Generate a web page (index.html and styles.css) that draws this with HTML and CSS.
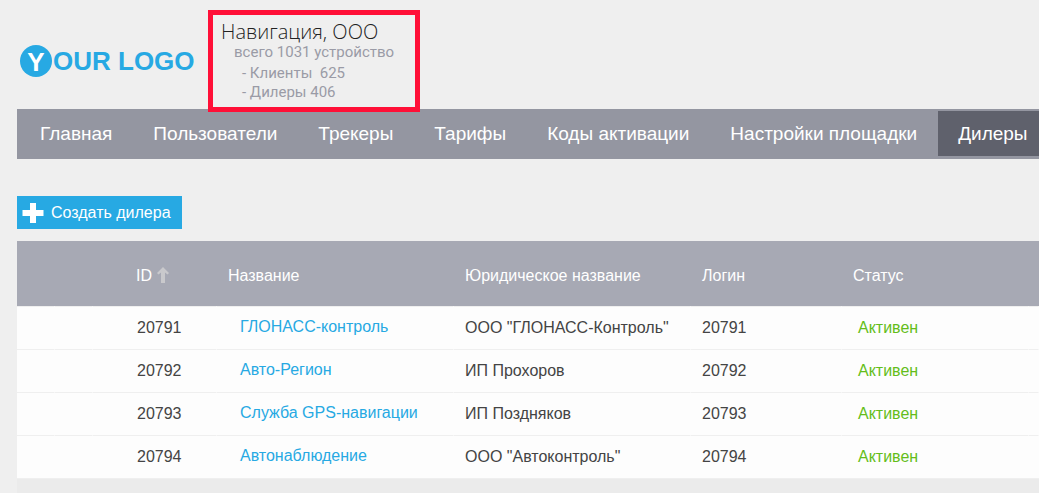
FILE: index.html
```html
<!DOCTYPE html>
<html lang="ru">
<head>
    <meta charset="UTF-8">
    <meta name="viewport" content="width=device-width, initial-scale=1.0">
    <title>Дилеры</title>
    <link rel="stylesheet" href="styles.css">
</head>
<body>
    <div class="header">
        <a class="logo" href="#"><span class="logo-mark">Y</span><span class="logo-text">OUR LOGO</span></a>
        <div class="account">
            <div class="account-name">Навигация, ООО</div>
            <div class="account-total">всего 1031 устройство</div>
            <ul class="account-stats">
                <li>- Клиенты&nbsp; 625</li>
                <li>- Дилеры 406</li>
            </ul>
        </div>
    </div>

    <nav class="nav">
        <a href="#">Главная</a>
        <a href="#">Пользователи</a>
        <a href="#">Трекеры</a>
        <a href="#">Тарифы</a>
        <a href="#">Коды активации</a>
        <a href="#">Настройки площадки</a>
        <a href="#" class="active">Дилеры</a>
    </nav>

    <div class="toolbar">
        <button class="create-btn" type="button">
            <svg width="22" height="22" viewBox="0 0 22 22"><path d="M8 1h6v7h7.500v6H14v7H8v-7H.5V8H8z" fill="#fff"/></svg>
            Создать дилера
        </button>
    </div>

    <table class="dealers">
        <colgroup>
            <col class="col-tool">
            <col class="col-tool">
            <col class="col-id">
            <col class="col-name">
            <col class="col-name">
            <col class="col-login">
            <col class="col-status">
            <col>
        </colgroup>
        <thead>
            <tr>
                <th></th>
                <th></th>
                <th class="id">ID <svg width="12" height="16" viewBox="0 0 12 16"><path d="M6 0l6 6-1.500 1.500L8 5.500V16H4V5.500L1.500 7.500 0 6z" fill="#c9c9cc"/></svg></th>
                <th>Название</th>
                <th>Юридическое название</th>
                <th>Логин</th>
                <th>Статус</th>
                <th></th>
            </tr>
        </thead>
        <tbody>
            <tr>
                <td></td>
                <td></td>
                <td class="id">20791</td>
                <td class="name"><a href="#">ГЛОНАСС-контроль</a></td>
                <td>ООО "ГЛОНАСС-Контроль"</td>
                <td>20791</td>
                <td class="status">Активен</td>
                <td></td>
            </tr>
            <tr>
                <td></td>
                <td></td>
                <td class="id">20792</td>
                <td class="name"><a href="#">Авто-Регион</a></td>
                <td>ИП Прохоров</td>
                <td>20792</td>
                <td class="status">Активен</td>
                <td></td>
            </tr>
            <tr>
                <td></td>
                <td></td>
                <td class="id">20793</td>
                <td class="name"><a href="#">Служба GPS-навигации</a></td>
                <td>ИП Поздняков</td>
                <td>20793</td>
                <td class="status">Активен</td>
                <td></td>
            </tr>
            <tr>
                <td></td>
                <td></td>
                <td class="id">20794</td>
                <td class="name"><a href="#">Автонаблюдение</a></td>
                <td>ООО "Автоконтроль"</td>
                <td>20794</td>
                <td class="status">Активен</td>
                <td></td>
            </tr>
        </tbody>
    </table>
    <div class="table-footer"></div>
</body>
</html>
```

FILE: styles.css
```css
* {
    margin: 0;
    padding: 0;
    box-sizing: border-box;
}

body {
    display: flex;
    flex-direction: column;
    min-height: 100vh;
    padding-left: 17px;
    overflow-x: hidden;
    background: #efefef;
    color: #444;
    font-family: "Liberation Sans", Arial, sans-serif;
    font-size: 16px;
}

a {
    color: #27a9e3;
    text-decoration: none;
}

.header {
    display: flex;
    align-items: flex-start;
    padding-top: 10px;
}

.logo {
    display: flex;
    align-items: center;
    width: 191px;
    padding-left: 3px;
    margin-top: 34px;
    font-size: 26px;
    font-weight: bold;
    line-height: 34px;
    white-space: nowrap;
}

.logo-mark {
    width: 32px;
    height: 32px;
    margin-right: 1px;
    border-radius: 50%;
    background: #27a9e3;
    color: #fff;
    text-align: center;
}

/* the frame hangs slightly over the menu */
.account {
    position: relative;
    z-index: 1;
    width: 212px;
    margin-bottom: -3px;
    padding: 6px 8px 5px;
    border: 5px solid #ff0f37;
    color: #9a9ba6;
    font-family: Roboto, sans-serif;
    font-size: 15px;
    line-height: 19px;
    white-space: nowrap;
}

.account-name {
    color: #222;
    font-family: "Open Sans", sans-serif;
    font-size: 20px;
    font-weight: 300;
    line-height: 22px;
}

.account-total {
    padding-left: 13px;
    margin-bottom: 2px;
}

.account-stats {
    padding-left: 21px;
    list-style: none;
}

.nav {
    display: flex;
    gap: 1px;
    height: 50px;
    padding: 2px 0 3px 3px;
    overflow: hidden;
    background: #9496a1;
}

.nav a {
    flex-shrink: 0;
    padding: 0 20px;
    color: #fff;
    font-size: 19px;
    line-height: 45px;
}

.nav a.active {
    background: #5f616c;
}

.toolbar {
    padding: 37px 0 12px;
}

.create-btn {
    display: flex;
    align-items: center;
    gap: 7px;
    height: 33px;
    padding: 0 11px 0 5px;
    border: none;
    background: #27a9e3;
    color: #fff;
    font-family: inherit;
    font-size: 16px;
    cursor: pointer;
}

.dealers {
    width: 100%;
    table-layout: fixed;
    border-collapse: separate;
    border-spacing: 0;
    white-space: nowrap;
}

.col-tool {
    width: 38px;
}

.col-id {
    width: 124px;
}

.col-name {
    width: 237px;
}

.col-login {
    width: 151px;
}

.col-status {
    width: 187px;
}

.dealers th {
    height: 65px;
    padding: 4px 0 0 11px;
    background: #a7a9b4;
    color: #fff;
    font-weight: normal;
    text-align: left;
}

.dealers th.id {
    padding-left: 43px;
}

.dealers th svg {
    margin-left: 1px;
    vertical-align: -2px;
}

.dealers td {
    height: 43px;
    padding-left: 11px;
    border-top: 1px solid #efefef;
    border-right: 1px solid #fdfdfd;
    background: #fdfdfd;
}

.dealers td.id {
    padding-left: 44px;
}

.dealers td.name {
    padding: 0 0 2px 23px;
}

.dealers td.status {
    padding-left: 16px;
    color: #64bd1a;
}

.table-footer {
    flex: 1;
    min-height: 14px;
    border-top: 1px solid #efefef;
    background: #ebebeb;
}
```
